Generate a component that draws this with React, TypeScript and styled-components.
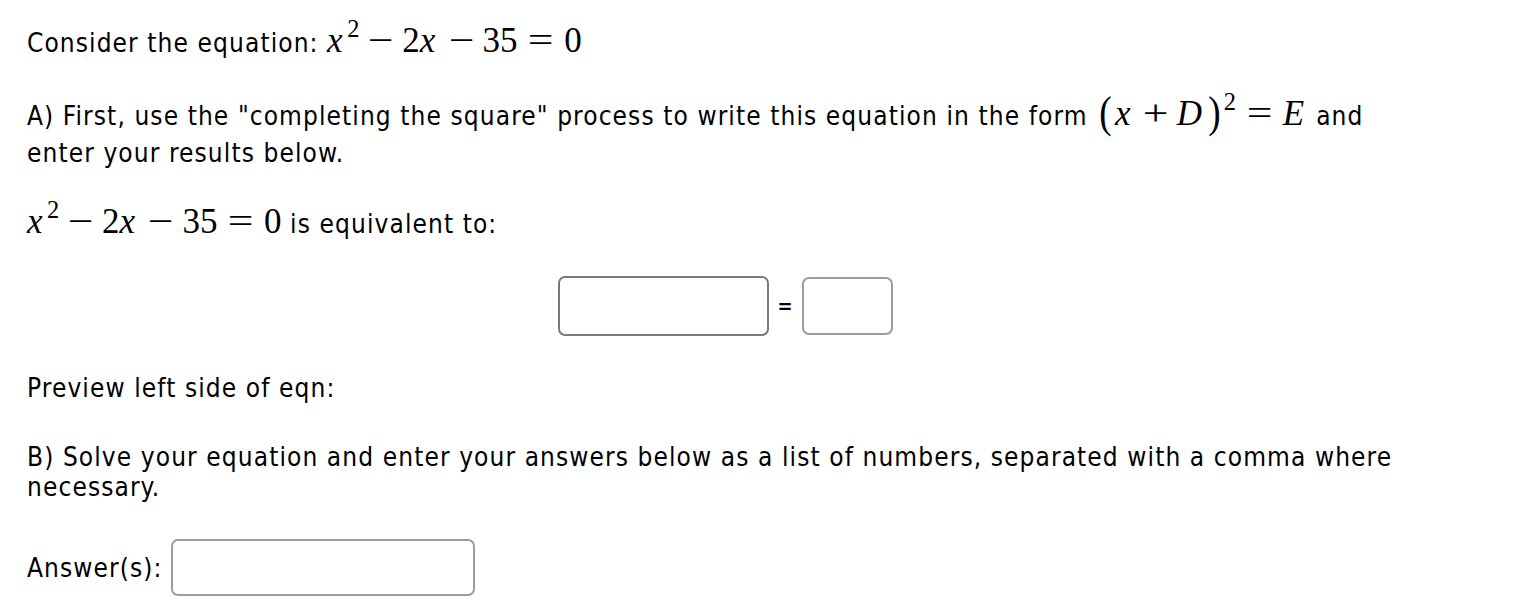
import React from "react";
import styled, { createGlobalStyle } from "styled-components";

const GlobalStyle = createGlobalStyle`
  html, body { margin: 0; padding: 0; background: #ffffff; }
  body { color: #000000; }
`;

const Page = styled.div`
  box-sizing: content-box;
  width: 1396px;
  padding: 28px 0 0 27px;
  font-family: "DejaVu Sans Condensed", "DejaVu Sans", sans-serif;
  font-size: 26px;
  letter-spacing: 1.1px;
  color: #000;
`;

const Para = styled.p<{ $lh?: number; $mt?: number }>`
  margin: ${(p) => p.$mt ?? 0}px 0 0 0;
  line-height: ${(p) => p.$lh ?? 31}px;
`;

const Math = styled.span`
  font-family: "Liberation Serif", "DejaVu Serif", serif;
  font-size: 35px;
  letter-spacing: 0;
  line-height: 0;
  white-space: nowrap;
`;

const Var = styled.i<{ $pad?: number }>`
  font-family: "Liberation Serif", serif;
  font-style: italic;
  padding-right: ${(p) => p.$pad ?? 0.13}em;
`;

const Sup = styled.sup`
  font-size: 0.7em;
  line-height: 0;
  vertical-align: 0.62em;
`;

const Op = styled.span<{ $rel?: boolean }>`
  display: inline-block;
  width: 0.778em;
  text-align: center;
  margin: 0 ${(p) => (p.$rel ? 0.278 : 0.222)}em;
  transform: scaleX(1.3);
  line-height: 0;
`;

const Paren = styled.span`
  display: inline-block;
  font-size: 1.25em;
  line-height: 0;
  padding: 0 0.05em;
  transform: translateY(0.04em) scaleX(0.85);
`;

const Row = styled.div`
  display: flex;
  justify-content: center;
  align-items: center;
  margin-top: 36px;
  height: 60px;
`;

const Field = styled.div<{ $w: number; $h: number; $c: string }>`
  box-sizing: border-box;
  width: ${(p) => p.$w}px;
  height: ${(p) => p.$h}px;
  border: 2px solid ${(p) => p.$c};
  border-radius: 7px;
  background: #fff;
`;

const Equals = styled.span`
  display: inline-block;
  width: 33px;
  text-align: center;
  font-size: 20px;
  font-weight: bold;
  letter-spacing: 0;
  line-height: 20px;
`;

const AnswerRow = styled.div`
  display: flex;
  align-items: center;
  gap: 9px;
  margin-top: 37px;
`;

const Label = styled.span`
  line-height: 31px;
  transform: translateY(1px);
`;

function Eq() {
  return (
    <Math>
      <Var>x</Var>
      <Sup>2</Sup>
      <Op>−</Op>2<Var>x</Var>
      <Op>−</Op>35
      <Op $rel>=</Op>0
    </Math>
  );
}

export default function App() {
  return (
    <>
      <GlobalStyle />
      <Page>
        <Para>
          Consider the equation: <Eq />
        </Para>
        <Para $mt={39} $lh={37}>
          A) First, use the "completing the square" process to write this
          equation in the form{" "}
          <Math>
            <Paren>(</Paren>
            <Var $pad={0.1}>x</Var>
            <Op>+</Op>
            <Var $pad={0.08}>D</Var>
            <Paren>)</Paren>
            <Sup>2</Sup>
            <Op $rel>=</Op>
            <Var $pad={0.1}>E</Var>
          </Math>{" "}
          and enter your results below.
        </Para>
        <Para $mt={37}>
          <Eq /> is equivalent to:
        </Para>
        <Row>
          <Field $w={211} $h={60} $c="#7a7a7a" />
          <Equals>=</Equals>
          <Field $w={91} $h={58} $c="#9d9d9d" />
        </Row>
        <Para $mt={37}>Preview left side of eqn:</Para>
        <Para $mt={38} $lh={30}>
          B) Solve your equation and enter your answers below as a list of
          numbers, separated with a comma where necessary.
        </Para>
        <AnswerRow>
          <Label>Answer(s):</Label>
          <Field $w={304} $h={57} $c="#9d9d9d" />
        </AnswerRow>
      </Page>
    </>
  );
}
